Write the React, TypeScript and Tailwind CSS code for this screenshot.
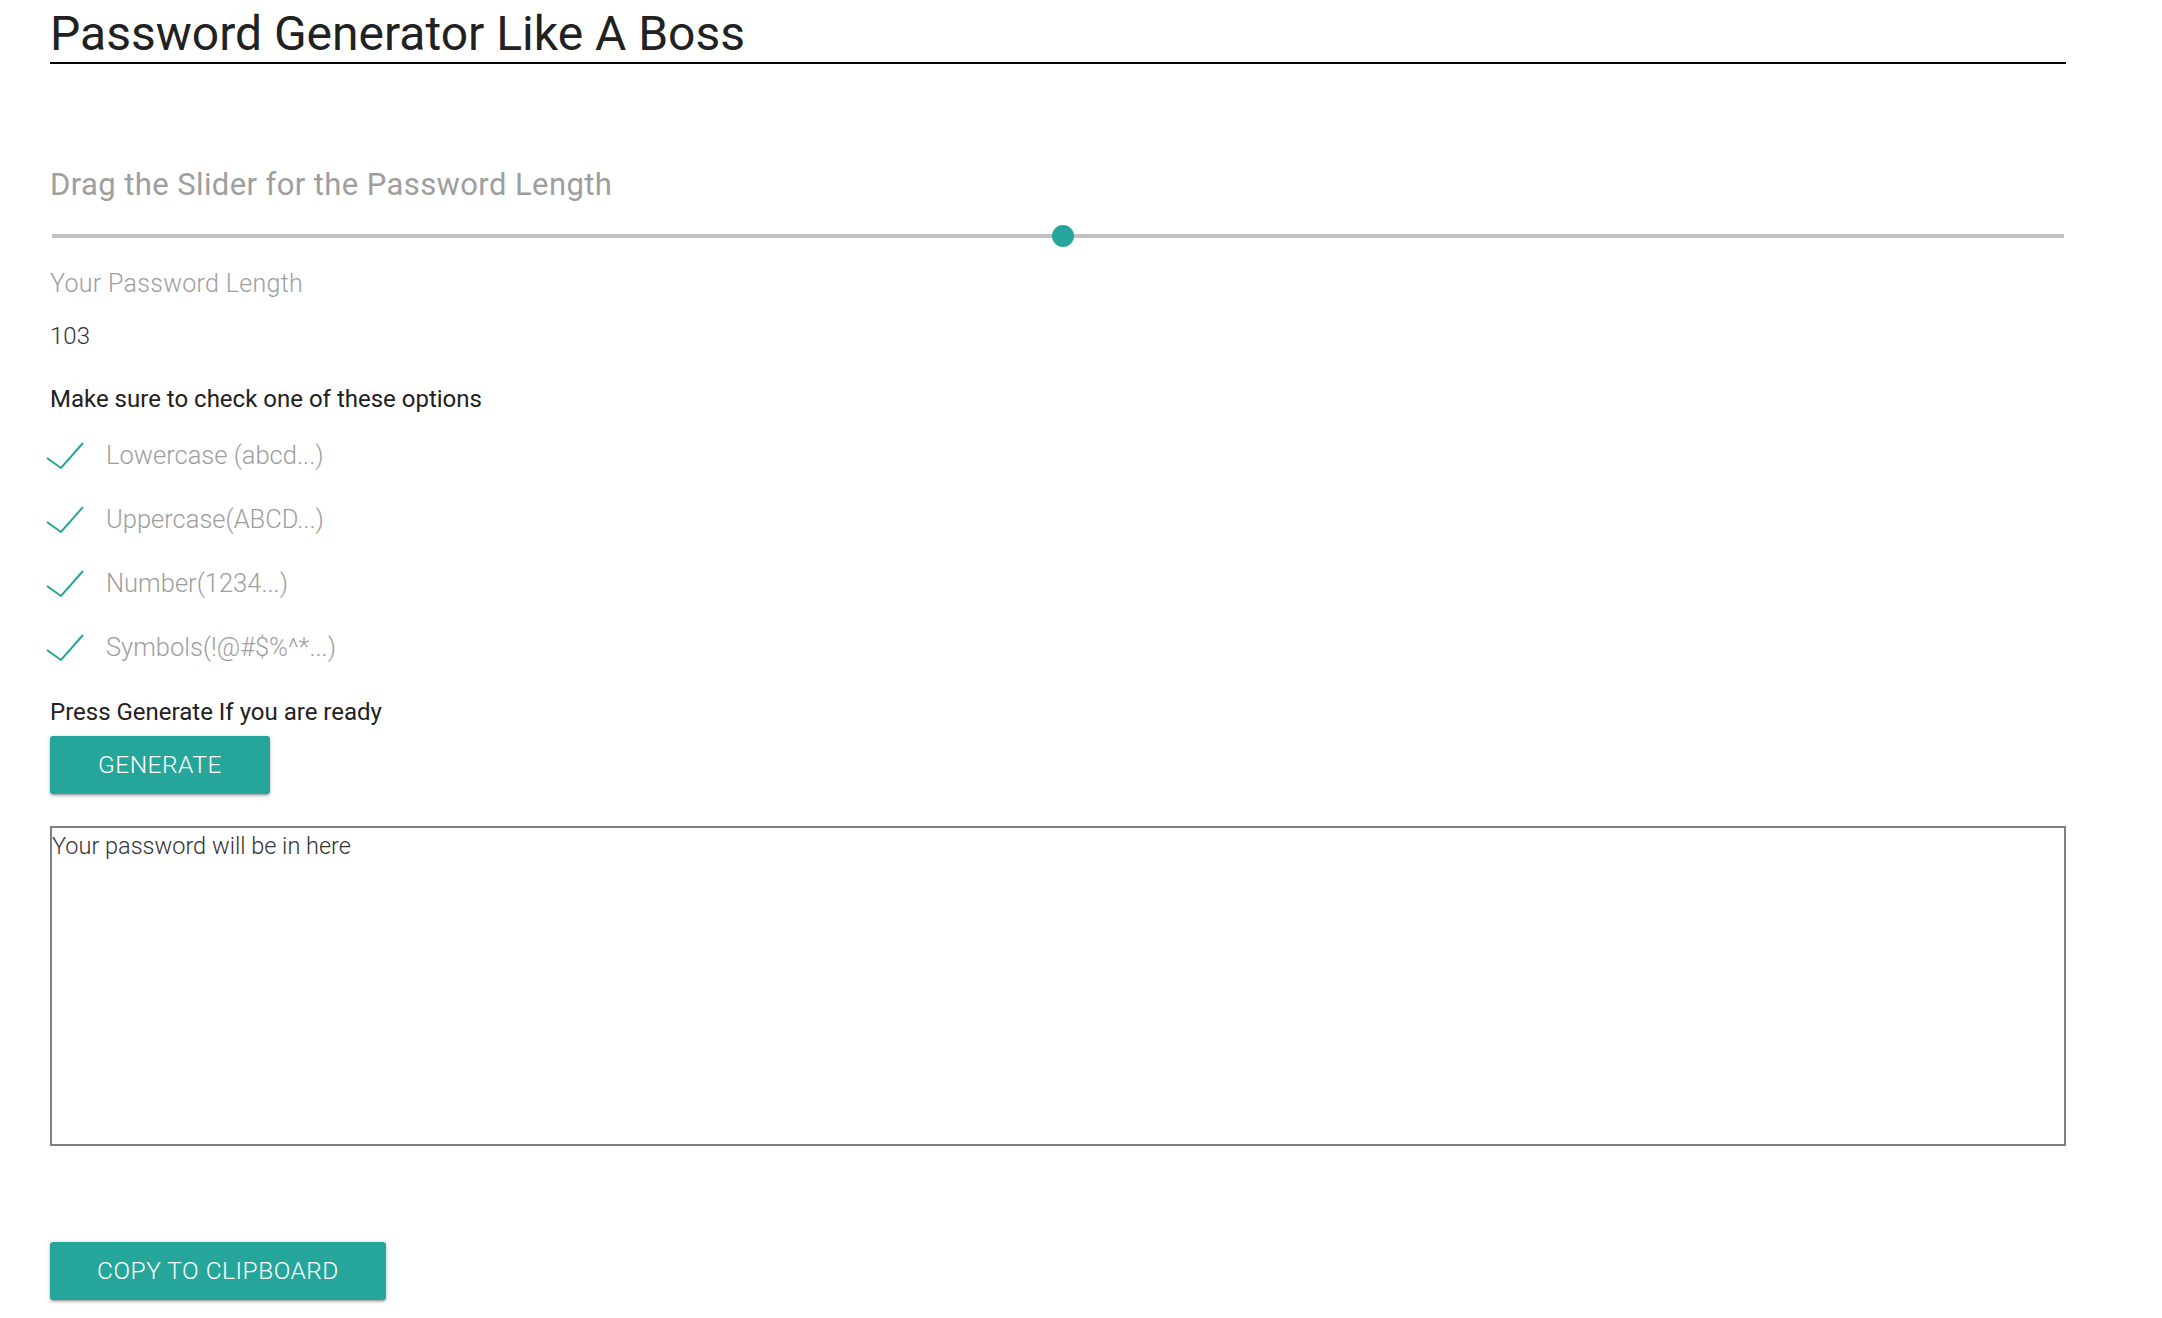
import * as React from "react";

const options = ["Lowercase (abcd...)", "Uppercase(ABCD...)", "Number(1234...)", "Symbols(!@#$%^*...)"];

function Check() {
    return (
        <svg width="60" height="30" viewBox="0 0 60 30" className="ml-[-4px] shrink-0">
            <path d="M1 18 L15 28 L37 3" fill="none" stroke="#26a69a" strokeWidth="2" />
        </svg>
    );
}

const btn =
    "flex items-center justify-center h-[58px] rounded-[3px] bg-[#26a69a] text-white text-[24.5px] font-light tracking-[0.5px] uppercase shadow-[0_2px_2px_0_rgba(0,0,0,0.14),0_3px_1px_-2px_rgba(0,0,0,0.12),0_1px_5px_0_rgba(0,0,0,0.2)]";

export default function App() {
    const [length] = React.useState(103);

    return (
        <div className="min-h-screen bg-white font-[Roboto,sans-serif]">
            <div className="ml-[50px] w-[2016px] flex flex-col items-start">
                <h1 className="mt-[6px] w-full border-b-2 border-black text-[48px] leading-[56px] font-normal text-[#212121]">
                    Password Generator Like A Boss
                </h1>

                <h5 className="mt-[103px] text-[31px] leading-[36px] tracking-[0.4px] text-[#9e9e9e]">Drag the Slider for the Password Length</h5>

                <div className="relative mt-[22px] h-[22px] w-full">
                    <div className="absolute left-[2px] right-[2px] top-[9px] h-[4px] bg-[#c2c0c2]" />
                    <div className="absolute left-[1002px] top-0 h-[22px] w-[22px] rounded-full bg-[#26a69a]" />
                </div>

                <p className="mt-[22px] text-[25px] leading-[30px] tracking-[0.3px] font-light text-[#9e9e9e]">Your Password Length</p>
                <p className="mt-[22px] text-[24px] leading-[30px] font-light text-[#333]">{length}</p>

                <p className="mt-[33px] text-[24px] leading-[30px] text-[#212121]">Make sure to check one of these options</p>

                <div className="mt-[26px] flex flex-col gap-[34px]">
                    {options.map((o) => (
                        <label key={o} className="flex items-start h-[30px]">
                            <Check />
                            <span className="text-[25.5px] leading-[30px] font-light text-[#9e9e9e]">{o}</span>
                        </label>
                    ))}
                </div>

                <p className="mt-[35px] text-[24px] leading-[30px] text-[#212121]">Press Generate If you are ready</p>
                <button className={`${btn} mt-[9px] w-[220px]`}>Generate</button>

                <textarea
                    className="mt-[32px] h-[320px] w-full resize-none border-2 border-[#808080] p-0 text-[23.5px] leading-[36px] font-light text-[#333] placeholder:text-[#333] outline-none"
                    placeholder="Your password will be in here"
                />

                <button className={`${btn} mt-[96px] w-[336px]`}>Copy to clipboard</button>
            </div>
        </div>
    );
}
